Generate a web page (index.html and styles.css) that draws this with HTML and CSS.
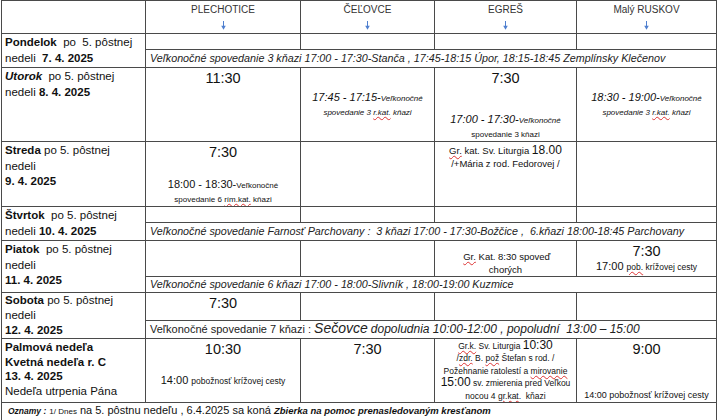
FILE: index.html
```html
<!DOCTYPE html>
<html lang="sk">
<head>
<meta charset="utf-8">
<title>Rozpis bohoslužieb</title>
<link rel="stylesheet" href="styles.css">
</head>
<body>
<table class="schedule">
  <colgroup>
    <col class="c-day"><col class="c-a"><col class="c-b"><col class="c-c"><col class="c-d">
  </colgroup>
  <tr class="r-head">
    <th></th>
    <th><span class="hname">PLECHOTICE</span><svg class="arrow" viewBox="0 0 7 9" width="7" height="9"><line x1="3.5" y1="0" x2="3.5" y2="6" /><path d="M1.2 4.8 L3.5 8.8 L5.8 4.8 Z"/></svg></th>
    <th><span class="hname">ČEĽOVCE</span><svg class="arrow" viewBox="0 0 7 9" width="7" height="9"><line x1="3.5" y1="0" x2="3.5" y2="6" /><path d="M1.2 4.8 L3.5 8.8 L5.8 4.8 Z"/></svg></th>
    <th><span class="hname">EGREŠ</span><svg class="arrow" viewBox="0 0 7 9" width="7" height="9"><line x1="3.5" y1="0" x2="3.5" y2="6" /><path d="M1.2 4.8 L3.5 8.8 L5.8 4.8 Z"/></svg></th>
    <th><span class="hname">Malý RUSKOV</span><svg class="arrow" viewBox="0 0 7 9" width="7" height="9"><line x1="3.5" y1="0" x2="3.5" y2="6" /><path d="M1.2 4.8 L3.5 8.8 L5.8 4.8 Z"/></svg></th>
  </tr>

  <tr class="r-pon1">
    <td rowspan="2" class="day"><b>Pondelok</b>&nbsp; po&nbsp; 5. pôstnej<br>nedeli&nbsp; <b>7. 4. 2025</b></td>
    <td></td><td></td><td></td><td></td>
  </tr>
  <tr class="r-pon2">
    <td colspan="4" class="note">Veľkonočné spovedanie 3 kňazi 17:00 - 17:30-Stanča , 17:45-18:15 Úpor, 18:15-18:45 Zemplínsky Klečenov</td>
  </tr>

  <tr class="r-uto">
    <td class="day"><b><i>Utorok</i></b>&nbsp; po 5. pôstnej<br>nedeli <b>8. 4. 2025</b></td>
    <td class="top"><div class="time">11:30</div></td>
    <td class="mid it"><span class="t11">17:45 - 17:15-</span><span class="t8">Veľkonočné</span><br><span class="t8">spovedanie 3 <u class="sp">r.kat.</u> kňazi</span></td>
    <td class="top"><div class="stack h-uto"><div class="time">7:30</div><div><span class="t11 it">17:00 - 17:30-</span><span class="t8 it">Veľkonočné</span><br><span class="t8">spovedanie 3 kňazi</span></div></div></td>
    <td class="mid it"><span class="t11">18:30 - 19:00-</span><span class="t8">Veľkonočné</span><br><span class="t8">spovedanie 3 <u class="sp">r.kat.</u> kňazi</span></td>
  </tr>

  <tr class="r-str">
    <td class="day"><b>Streda</b> po 5. pôstnej<br>nedeli<br><b>9. 4. 2025</b></td>
    <td class="top"><div class="stack h-str"><div class="time">7:30</div><div><span class="t11">18:00 - 18:30-</span><span class="t8">Veľkonočné</span><br><span class="t8">spovedanie 6 <u class="sp">rím.kat.</u> kňazi</span></div></div></td>
    <td></td>
    <td class="top small"><u class="sp">Gr.</u> kat. Sv. Liturgia <span class="t12">18.00</span><br>/+Mária z rod. Fedorovej /</td>
    <td></td>
  </tr>

  <tr class="r-stv1">
    <td rowspan="2" class="day"><b>Štvrtok</b>&nbsp; po 5. pôstnej<br>nedeli <b>10. 4. 2025</b></td>
    <td></td><td></td><td></td><td></td>
  </tr>
  <tr class="r-stv2">
    <td colspan="4" class="note">Veľkonočné spovedanie Farnosť Parchovany :&nbsp; 3 kňazi 17:00 - 17:30-Božčice ,&nbsp; 6.kňazi 18:00-18:45 Parchovany</td>
  </tr>

  <tr class="r-pia1">
    <td rowspan="2" class="day"><b>Piatok</b>&nbsp; po 5. pôstnej<br>nedeli<br><b>11. 4. 2025</b></td>
    <td></td><td></td>
    <td class="bot small">&nbsp;<u class="sp">Gr.</u> Kat. 8:30 spoveď<br>chorých</td>
    <td class="top"><div class="time">7:30</div><div class="line2"><span class="t11">17:00</span> <span class="t9"><u class="sp">pob.</u> krížovej cesty</span></div></td>
  </tr>
  <tr class="r-pia2">
    <td colspan="4" class="note">Veľkonočné spovedanie 6 kňazi 17:00 - 18:00-Slivník , 18:00-19:00 Kuzmice</td>
  </tr>

  <tr class="r-sob1">
    <td rowspan="2" class="day day-tight"><b>Sobota</b> po 5. pôstnej<br>nedeli<br><b>12. 4. 2025</b></td>
    <td class="top"><div class="time">7:30</div></td>
    <td></td><td></td><td></td>
  </tr>
  <tr class="r-sob2">
    <td colspan="4" class="note2">Veľkonočné spovedanie 7 kňazi : <i class="big">Sečovce</i> <i>dopoludnia 10:00-12:00 , popoludní&nbsp; 13:00 – 15:00</i></td>
  </tr>

  <tr class="r-pal">
    <td class="day day-pal"><b>Palmová nedeľa<br>Kvetná nedeľa r. C<br>13. 4. 2025</b><br>Nedeľa utrpenia Pána</td>
    <td class="top"><div class="time">10:30</div><div class="pal-note"><span class="t11">14:00</span> <span class="t9">pobožnosť krížovej cesty</span></div></td>
    <td class="top"><div class="time">7:30</div></td>
    <td class="top egres-pal"><u class="sp">Gr.k.</u> Sv. Liturgia <span class="t12">10:30</span><br>/<u class="sp">zdr.</u> B. <u class="sp">pož</u> Štefan s rod. /<br>Požehnanie ratolestí a <u class="sp">mirovanie</u><br><span class="t12">15:00</span> sv. zmierenia pred Veľkou<br>nocou 4 <u class="sp">gr.kat.</u>&nbsp; kňazi</td>
    <td class="top"><div class="stack h-pal"><div class="time">9:00</div><div class="t9b">14:00 pobožnosť krížovej cesty</div></div></td>
  </tr>

  <tr class="r-ozn">
    <td colspan="5" class="ozn"><b><i class="t9">Oznamy :</i></b> <span class="t8">1/ Dnes</span> na 5. pôstnu nedeľu , 6.4.2025 sa koná <b><i class="t10">Zbierka na pomoc prenasledovaným kresťanom</i></b></td>
  </tr>
</table>
</body>
</html>
```

FILE: styles.css
```css
html, body {
  margin: 0;
  padding: 0;
  background: #fff;
}
body {
  padding: 0 0 0 1px;
  font-family: "Liberation Sans", Arial, sans-serif;
  color: #111;
}
.schedule {
  border-collapse: collapse;
  table-layout: fixed;
  width: 716px;
  font-size: 11px;
}
.c-day { width: 144px; }
.c-a { width: 155px; }
.c-b { width: 134px; }
.c-c { width: 142px; }
.c-d { width: 140px; }

.schedule th,
.schedule td {
  border: 1px solid #4a4a4a;
  padding: 0 2px;
  vertical-align: top;
  text-align: center;
  overflow: hidden;
}
.schedule th {
  font-weight: normal;
  color: #333;
  font-size: 10px;
  padding-top: 3px;
}
.hname {
  display: block;
  line-height: 11px;
}
.arrow {
  display: block;
  margin: 6px auto 0;
}
.arrow line {
  stroke: #4f7fcf;
  stroke-width: 1;
}
.arrow path {
  fill: #4f7fcf;
}

.r-head { height: 33px; }
.r-pon1 { height: 14px; }
.r-pon2 { height: 15px; }
.r-uto { height: 74px; }
.r-str { height: 65px; }
.r-stv1 { height: 15px; }
.r-stv2 { height: 16px; }
.r-pia1 { height: 36px; }
.r-pia2 { height: 16px; }
.r-sob1 { height: 26px; }
.r-sob2 { height: 16px; }
.r-pal { height: 63px; }
.r-ozn { height: 18px; }

.schedule td.day {
  text-align: left;
  padding: 1px 3px;
  line-height: 15.5px;
  font-size: 11.5px;
}
.schedule td.day-tight {
  padding: 0 3px;
  line-height: 15px;
}
.schedule td.day-pal {
  line-height: 14.5px;
  font-size: 11.5px;
}

.schedule td.note {
  text-align: left;
  font-style: italic;
  font-size: 10.75px;
  padding: 0 4px;
  vertical-align: middle;
  color: #222;
  white-space: nowrap;
  line-height: 13px;
}
.schedule td.note2 {
  text-align: left;
  font-size: 11px;
  padding: 0 4px;
  vertical-align: middle;
  color: #222;
  white-space: nowrap;
  line-height: 13px;
}
.note2 .big {
  font-size: 14px;
  line-height: 10px;
}
.note2 i {
  font-size: 12px;
}

.schedule td.mid { vertical-align: middle; }
.schedule td.bot { vertical-align: bottom; }
.it { font-style: italic; }

.time {
  font-size: 14.5px;
  line-height: 17px;
  padding-top: 2px;
}
.t8 { font-size: 8px; }
.t9 { font-size: 8.5px; }
.t9b { font-size: 9px; }
.t10 { font-size: 9.5px; }
.t11 { font-size: 11px; }
.t12 { font-size: 12px; }

.mid { line-height: 12px; }
.stack {
  display: flex;
  flex-direction: column;
  justify-content: space-between;
  line-height: 12px;
}
.h-uto { height: 73px; }
.h-str { height: 64px; }
.h-pal { height: 62px; }

.small {
  font-size: 9.5px;
  line-height: 13px;
}
.schedule td.small { padding-top: 2px; }
.line2 {
  line-height: 12px;
}
.pal-note {
  margin-top: 16px;
  line-height: 12px;
}
.schedule td.egres-pal {
  font-size: 8.5px;
  line-height: 12.4px;
  padding-top: 1px;
}
.egres-pal .t12 {
  line-height: 10px;
}
u.sp {
  text-decoration: underline wavy #d33;
  text-decoration-thickness: 1px;
  text-underline-offset: 1px;
}
.schedule td.ozn {
  text-align: left;
  font-size: 11px;
  padding: 1px 6px;
  vertical-align: top;
  white-space: nowrap;
}
```
